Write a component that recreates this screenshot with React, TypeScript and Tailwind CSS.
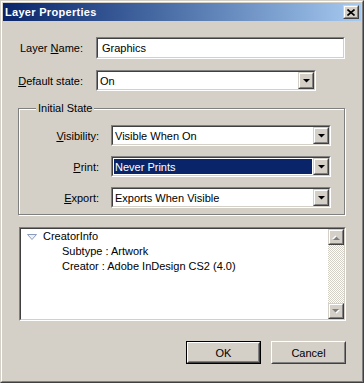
import React from "react";

const Sunken = ({ className = "", children }: { className?: string; children?: React.ReactNode }) => (
  <div className={"border border-t-[#808080] border-l-[#808080] border-b-white border-r-white " + className}>
    <div className="h-full border border-t-[#404040] border-l-[#404040] border-b-[#d4d0c8] border-r-[#d4d0c8] bg-white flex">
      {children}
    </div>
  </div>
);

const Raised = ({ className = "", children }: { className?: string; children?: React.ReactNode }) => (
  <div className={"border border-t-[#d4d0c8] border-l-[#d4d0c8] border-b-[#404040] border-r-[#404040] " + className}>
    <div className="h-full border border-t-white border-l-white border-b-[#808080] border-r-[#808080] bg-[#d4d0c8] flex items-center justify-center">
      {children}
    </div>
  </div>
);

const DownArrow = ({ color = "#000" }: { color?: string }) => (
  <svg width="7" height="4" viewBox="0 0 7 4">
    <polygon points="0,0 7,0 3.5,3.6" fill={color} />
  </svg>
);

const Select = ({ value, className, selected }: { value: string; className: string; selected?: boolean }) => (
  <Sunken className={"h-[21px] " + className}>
    <div className="flex-1 p-[1px]">
      <div
        className={
          "h-full flex items-center pl-[1px] whitespace-nowrap " +
          (selected ? "bg-[#0a246a] text-white" : "")
        }
      >
        {value}
      </div>
    </div>
    <Raised className="w-[16px] h-full">
      <DownArrow />
    </Raised>
  </Sunken>
);

const ScrollBtn = ({ up }: { up?: boolean }) => (
  <Raised className="w-[16px] h-[16px]">
    <svg width="8" height="5" viewBox="0 0 8 5" className={up ? "rotate-180" : ""}>
      <polygon points="1,1 8,1 4.5,4.5" fill="#fff" />
      <polygon points="0,0 7,0 3.5,3.5" fill="#808080" />
    </svg>
  </Raised>
);

const Push = ({ label, isDefault }: { label: string; isDefault?: boolean }) => (
  <div className={"w-[75px] h-[23px] " + (isDefault ? "border border-black" : "")}>
    <div className="h-full border border-t-white border-l-white border-b-[#404040] border-r-[#404040]">
      <div className="h-full border border-t-[#d4d0c8] border-l-[#d4d0c8] border-b-[#808080] border-r-[#808080] flex items-center justify-center">
        {label}
      </div>
    </div>
  </div>
);

export default function App() {
  return (
    <div className="w-[364px] h-[383px] border border-t-[#d4d0c8] border-l-[#d4d0c8] border-b-[#404040] border-r-[#404040] font-['Liberation_Sans',Arial,sans-serif] text-[11px] leading-[14px] text-black">
      <div className="h-full border border-t-white border-l-white border-b-[#808080] border-r-[#808080] bg-[#d4d0c8] p-[1px] flex flex-col">
        {/* title bar */}
        <div className="h-[18px] flex items-center bg-gradient-to-r from-[#0a246a] to-[#a6caf0] pl-[2px] pr-[2px]">
          <span className="flex-1 text-white font-bold tracking-[0.3px]">Layer Properties</span>
          <Raised className="w-[16px] h-[14px]">
            <svg width="8" height="7" viewBox="0 0 8 7">
              <path d="M0.5 0.5 L7.5 6.5 M7.5 0.5 L0.5 6.5" stroke="#000" strokeWidth="1.6" />
            </svg>
          </Raised>
        </div>

        {/* name */}
        <div className="mt-[16px] flex items-center h-[22px]">
          <div className="w-[80px] text-right">
            Layer <u>N</u>ame:
          </div>
          <Sunken className="ml-[13px] w-[249px] h-[22px]">
            <div className="flex items-center pl-[4px]">Graphics</div>
          </Sunken>
        </div>

        <div className="mt-[11px] flex items-center h-[21px]">
          <div className="w-[80px] text-right">
            <u>D</u>efault state:
          </div>
          <Select className="ml-[13px] w-[220px]" value="On" />
        </div>

        {/* group */}
        <div className="relative mt-[17px] ml-[15px] w-[327px] h-[107px] border border-[#808080] shadow-[1px_1px_0_#fff,inset_1px_1px_0_#fff] pt-[16px] flex flex-col gap-[10px]">
          <span className="absolute left-[17px] top-[-8px] px-[2px] bg-[#d4d0c8]">Initial State</span>
          <div className="flex items-center h-[21px]">
            <div className="w-[80px] text-right">
              <u>V</u>isibility:
            </div>
            <Select className="ml-[12px] w-[220px]" value="Visible When On" />
          </div>
          <div className="flex items-center h-[21px]">
            <div className="w-[80px] text-right">
              <u>P</u>rint:
            </div>
            <Select className="ml-[12px] w-[220px]" value="Never Prints" selected />
          </div>
          <div className="flex items-center h-[21px]">
            <div className="w-[80px] text-right">
              <u>E</u>xport:
            </div>
            <Select className="ml-[12px] w-[220px]" value="Exports When Visible" />
          </div>
        </div>

        {/* tree list */}
        <Sunken className="mt-[12px] ml-[16px] w-[327px] h-[94px]">
          <div className="flex-1 leading-[15px]">
            <div className="flex items-center pl-[6px]">
              <svg width="10" height="6" viewBox="0 0 10 6">
                <polygon points="0.5,0.5 9.5,0.5 5,5.5" fill="#eef2f8" stroke="#8b9dbf" />
              </svg>
              <span className="ml-[6px]">CreatorInfo</span>
            </div>
            <div className="pl-[41px]">Subtype : Artwork</div>
            <div className="pl-[41px]">Creator : Adobe InDesign CS2 (4.0)</div>
          </div>
          <div className="w-[16px] flex flex-col">
            <ScrollBtn up />
            <div className="flex-1 bg-[repeating-conic-gradient(#d4d0c8_0_25%,#fff_0_50%)] bg-[length:2px_2px]" />
            <ScrollBtn />
          </div>
        </Sunken>

        {/* buttons */}
        <div className="mt-[20px] flex justify-end gap-[10px] pr-[15px]">
          <Push label="OK" isDefault />
          <Push label="Cancel" />
        </div>
      </div>
    </div>
  );
}
